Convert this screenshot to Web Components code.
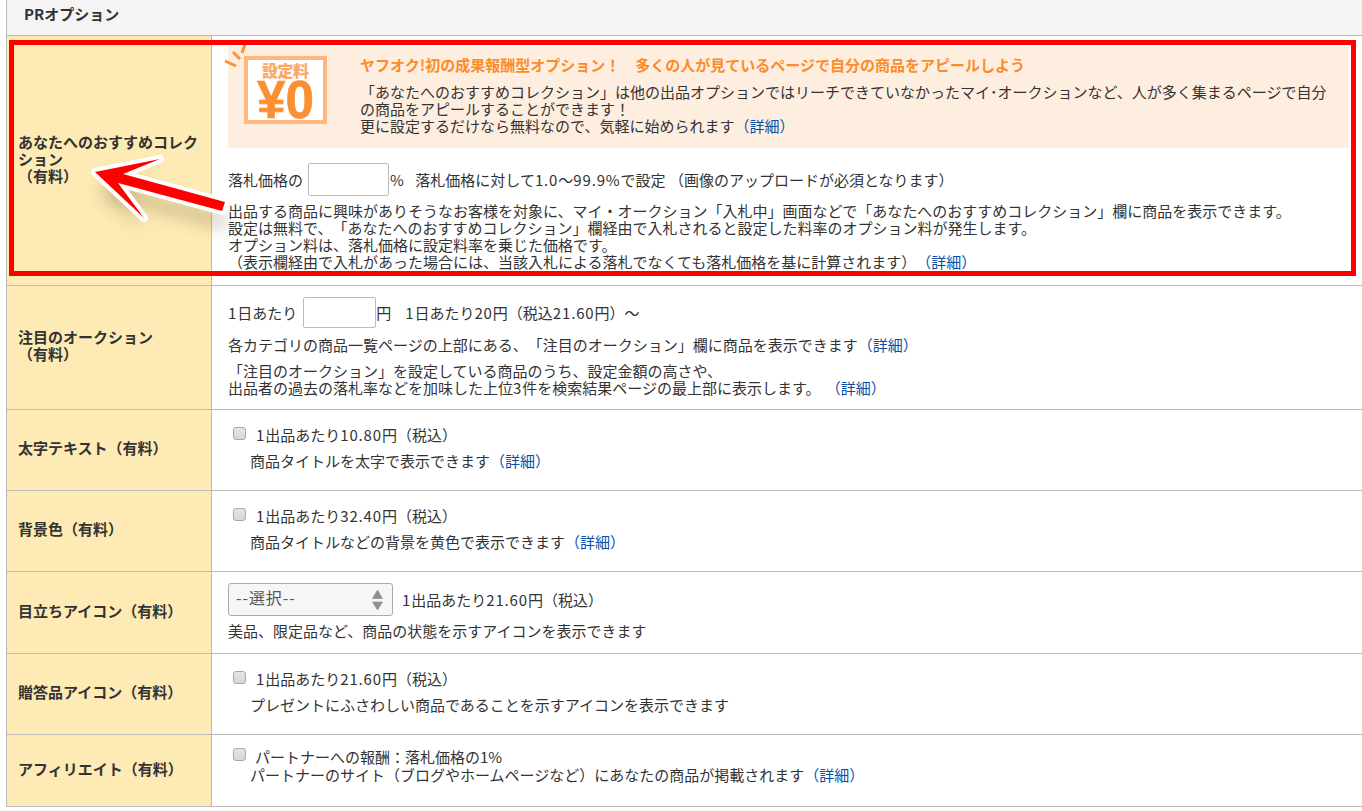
<!DOCTYPE html>
<html lang="ja"><head><meta charset="utf-8"><title>PRオプション</title>
<style>
html,body{margin:0;padding:0;background:#fff}
body{font:15px/17px "Noto Sans CJK JP","Noto Sans",sans-serif;color:#333;height:811px;overflow:hidden;text-spacing-trim:space-all}
.gap{display:block}
.n{letter-spacing:.85px}
</style></head><body>
<template id="t-panel"><style>
:host{display:block;position:relative;margin-left:6px;border-left:1px solid #bbb;border-bottom:1px solid #bbb;width:1356px}
.h{box-sizing:border-box;background:#f4f4f4;border-bottom:1px solid #bbb;padding:5px 0 0 17px;font-weight:700;font-size:15px;line-height:18px;color:#333;height:36px}
</style><div class="h"><slot name="title"></slot></div><slot></slot></template>

<template id="t-row"><style>
:host{display:grid;grid-template-columns:205px 1fr;height:var(--h);box-sizing:border-box;border-bottom:1px solid #bbb}
:host([last]){border-bottom:0}
.l{background:#feeab4;border-right:1px solid #bbb;display:flex;align-items:center;padding:0 6px 5px 11px;font-weight:700;line-height:17px;color:#333;white-space:pre-line}
.c{padding:var(--pt,0) 0 0 16px;min-width:0}
</style><div class="l"><slot name="label"></slot></div><div class="c"><slot></slot></div></template>

<template id="t-link"><style>:host{display:inline;color:#0b4fa8}</style><slot></slot></template>

<template id="t-check"><style>
:host{display:block;position:relative;padding-left:var(--ind,28px)}
i{position:absolute;left:5px;top:var(--ct,0);width:13px;height:13px;box-sizing:border-box;border:1px solid #a8a8a8;border-radius:3px;background:linear-gradient(#e6e6e6,#d6d6d6)}
</style><i></i><slot></slot></template>

<template id="t-field"><style>
:host{display:inline-block;box-sizing:border-box;height:var(--fh,33px);width:var(--w,81px);border:1px solid #bbb;border-radius:2px;background:#fff;vertical-align:top}
</style></template>

<template id="t-select"><style>
:host{display:inline-flex;align-items:center;justify-content:space-between;box-sizing:border-box;width:165px;height:33px;border:1px solid #aaa;border-radius:3px;background:#f6f6f6;padding:0 9px 0 7px;color:#555;vertical-align:top;font-size:16px;letter-spacing:.9px;line-height:20px}
.x{margin-top:-5px}
svg{display:block}
</style><span class="x"><slot></slot></span><svg width="11" height="20" viewBox="0 0 11 20"><path d="M5.500 0 10.500 8.500H.5zM.5 12H10.500L5.500 20z" fill="#8f8f8f" stroke="#8f8f8f" stroke-linejoin="round" stroke-width=".6"/></svg></template>

<template id="t-promo"><style>
:host{display:block;margin:11px 14px 0 0;height:101px;background:#feeee0;position:relative;box-sizing:border-box;padding:9px 0 0 132px}
.b{position:absolute;left:0;top:-11px;width:110px;height:92px;overflow:visible}
h3{margin:0 0 9px;font-size:15px;line-height:18px;font-weight:700;color:#fb8c2a}
.t{line-height:17px;color:#333;padding-right:20px}
.y{font:700 53px/53px "Liberation Sans",sans-serif;fill:#fb8f33;stroke:#fb8f33;stroke-width:.6px}
.s{font:900 16px/16px "Noto Sans CJK JP",sans-serif;fill:#f8a968}
</style>
<svg class="b" viewBox="0 0 110 92" aria-hidden="true">
<g stroke="#fb9238" stroke-width="3" fill="none"><path d="M-3 25 8 30M5 16 12 23M17 8 14 17" /></g>
<rect x="18" y="22" width="79" height="64" fill="#fff" stroke="#fdb77f" stroke-width="4"/>
<text class="s" x="34" y="41" textLength="47">設定料</text>
<text class="y" x="29" y="82" textLength="57" lengthAdjust="spacingAndGlyphs">¥0</text>
</svg>
<h3><slot name="head"></slot></h3><div class="t"><slot></slot></div></template>

<template id="t-overlay"><style>
:host{position:absolute;inset:0;pointer-events:none;display:block}
.box{position:absolute;left:2px;top:40px;width:1337px;height:226px;box-sizing:content-box;border:5px solid #f00}
svg{position:absolute;left:0;top:0;overflow:visible}
</style><div class="box"></div>
<svg width="300" height="300" viewBox="7 0 300 300" aria-hidden="true">
<defs><filter id="sh" x="-40%" y="-80%" width="180%" height="300%"><feGaussianBlur stdDeviation="9"/></filter></defs>
<path d="M95 172 160 159 123 174 225 202 222 211 118 183 144 218Z" fill="#6d5a30" opacity=".45" filter="url(#sh)" transform="translate(3 16)"/>
<path d="M95 172 160 159 123 174 225 202 222 211 118 183 144 218Z" fill="#f00" stroke="#fff" stroke-width="8" stroke-linejoin="round" paint-order="stroke"/>
</svg></template>

<script>
const mk=(name,id)=>customElements.define(name,class extends HTMLElement{constructor(){super();this.attachShadow({mode:'open'}).append(document.getElementById(id).content.cloneNode(true))}});
[['pr-panel','t-panel'],['pr-row','t-row'],['pr-link','t-link'],['pr-check','t-check'],['pr-field','t-field'],['pr-select','t-select'],['pr-promo','t-promo'],['pr-overlay','t-overlay']].forEach(a=>mk(...a));
</script>

<pr-panel>
<span slot="title">PRオプション</span>

<pr-row style="--h:250px">
<span slot="label">あなたへのおすすめコレクション
（有料）</span>
<pr-promo>
<span slot="head">ヤフオク!初の成果報酬型オプション！　多くの人が見ているページで自分の商品をアピールしよう</span>
「あなたへのおすすめコレクション」は他の出品オプションではリーチできていなかったマイ･オークションなど、人が多く集まるページで自分の商品をアピールすることができます！<br>更に設定するだけなら無料なので、気軽に始められます<pr-link>（詳細）</pr-link>
</pr-promo>
<div class="gap" style="margin-top:15px;height:33px;line-height:33px">落札価格の<pr-field style="margin-left:5px"></pr-field><span style="margin-left:1px">%</span><span style="margin-left:11.500px">落札価格に対して<span class="n">1.0</span>～<span class="n">99.9%</span>で設定</span> （画像のアップロードが必須となります）</div>
<div class="gap" style="margin-top:6px">出品する商品に興味がありそうなお客様を対象に、マイ・オークション「入札中」画面などで「あなたへのおすすめコレクション」欄に商品を表示できます。<br>設定は無料で、「あなたへのおすすめコレクション」欄経由で入札されると設定した料率のオプション料が発生します。<br>オプション料は、落札価格に設定料率を乗じた価格です。<br>（表示欄経由で入札があった場合には、当該入札による落札でなくても落札価格を基に計算されます）<pr-link>（詳細）</pr-link></div>
</pr-row>

<pr-row style="--h:124px;--pt:11px">
<span slot="label">注目のオークション
（有料）</span>
<div class="gap" style="height:31px;line-height:31px"><span class="n">1</span>日あたり<pr-field style="--w:73px;--fh:31px;margin-left:6px"></pr-field>円<span style="margin-left:14px"><span class="n">1</span>日あたり<span class="n">20</span>円（税込<span class="n">21.60</span>円）～</span></div>
<div class="gap" style="margin-top:8px">各カテゴリの商品一覧ページの上部にある、「注目のオークション」欄に商品を表示できます<pr-link>（詳細）</pr-link></div>
<div class="gap" style="margin-top:9px">「注目のオークション」を設定している商品のうち、設定金額の高さや、<br>出品者の過去の落札率などを加味した上位<span class="n">3</span>件を検索結果ページの最上部に表示します。 <pr-link style="margin-left:2px">（詳細）</pr-link></div>
</pr-row>

<pr-row style="--h:81px;--pt:16px">
<span slot="label">太字テキスト（有料）</span>
<pr-check style="--ct:1px"><span class="n">1</span>出品あたり<span class="n">10.80</span>円（税込）</pr-check>
<div class="gap" style="margin:9px 0 0 22px">商品タイトルを太字で表示できます<pr-link>（詳細）</pr-link></div>
</pr-row>

<pr-row style="--h:81px;--pt:16px">
<span slot="label">背景色（有料）</span>
<pr-check style="--ct:1px"><span class="n">1</span>出品あたり<span class="n">32.40</span>円（税込）</pr-check>
<div class="gap" style="margin:9px 0 0 22px">商品タイトルなどの背景を黄色で表示できます<pr-link>（詳細）</pr-link></div>
</pr-row>

<pr-row style="--h:82px;--pt:11px">
<span slot="label">目立ちアイコン（有料）</span>
<div class="gap" style="height:33px;line-height:33px"><pr-select style="margin-right:9px">--選択--</pr-select><span class="n">1</span>出品あたり<span class="n">21.60</span>円（税込）</div>
<div class="gap" style="margin-top:6px">美品、限定品など、商品の状態を示すアイコンを表示できます</div>
</pr-row>

<pr-row style="--h:81px;--pt:16px">
<span slot="label">贈答品アイコン（有料）</span>
<pr-check style="--ct:1px"><span class="n">1</span>出品あたり<span class="n">21.60</span>円（税込）</pr-check>
<div class="gap" style="margin:9px 0 0 22px">プレゼントにふさわしい商品であることを示すアイコンを表示できます</div>
</pr-row>

<pr-row style="--h:71px;--pt:13px" last>
<span slot="label">アフィリエイト（有料）</span>
<pr-check style="--ct:0px;--ind:27px">パートナーへの報酬：落札価格の1%</pr-check>
<div class="gap" style="margin:1px 0 0 22px">パートナーのサイト（ブログやホームページなど）にあなたの商品が掲載されます<pr-link>（詳細）</pr-link></div>
</pr-row>

<pr-overlay></pr-overlay>
</pr-panel>
</body></html>
